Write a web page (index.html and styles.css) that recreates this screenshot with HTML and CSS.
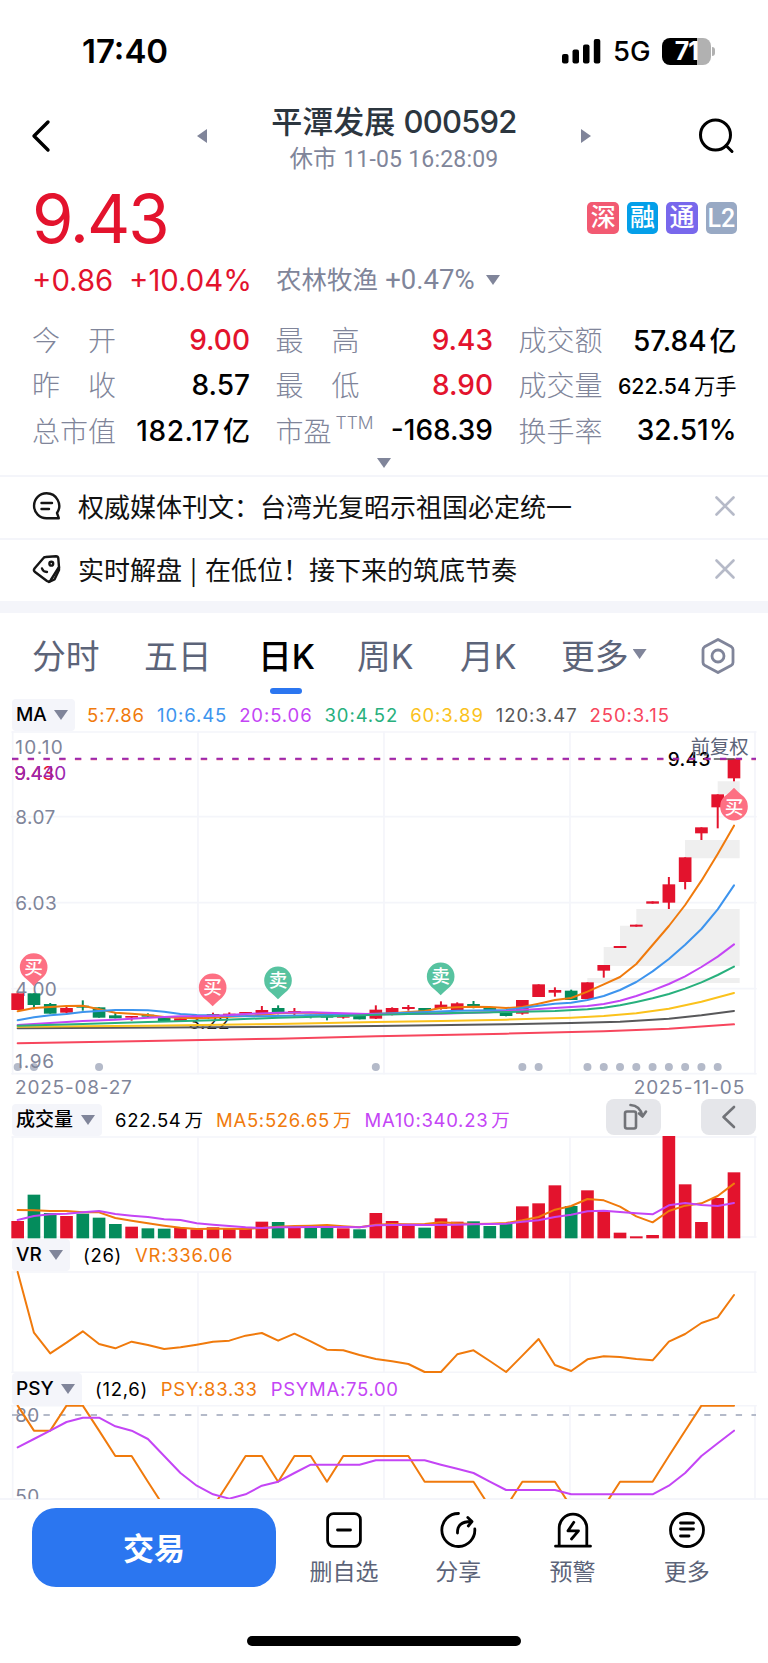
FILE: index.html
```html
<!DOCTYPE html>
<html lang="zh-CN">
<head>
    <meta charset="UTF-8">
    <meta name="viewport" content="width=device-width, initial-scale=1.0">
    <title>平潭发展 000592</title>
    <link rel="stylesheet" href="styles.css">
</head>
<body>
    <div class="status">
        <span class="time">17:40</span>
        <svg class="signal" width="39" height="25" viewBox="0 0 39 25">
            <rect x="0" y="15" width="6.5" height="9.5" rx="2"/>
            <rect x="10.5" y="10.5" width="6.5" height="14" rx="2"/>
            <rect x="21" y="5.5" width="6.5" height="19" rx="2"/>
            <rect x="31.8" y="0" width="6.5" height="24.5" rx="2"/>
        </svg>
        <span class="net">5G</span>
        <div class="battery"><span>71</span></div>
        <i class="battery-cap"></i>
    </div>

    <header class="header">
        <svg class="back" width="20" height="34" viewBox="0 0 20 34"><path d="M17 3 L3 17 L17 31"/></svg>
        <i class="tri tri-left"></i>
        <div class="title">
            <h1>平潭发展 <span>000592</span></h1>
            <p>休市 <span>11-05 16:28:09</span></p>
        </div>
        <i class="tri tri-right"></i>
        <svg class="search" width="37" height="37" viewBox="0 0 37 37"><circle cx="17.5" cy="17" r="15"/><path d="M28 27.5 L34 33.5"/></svg>
    </header>

    <section class="quote">
        <div class="price-row">
            <span class="price">9.43</span>
            <div class="tags">
                <span class="tag tag-red">深</span>
                <span class="tag tag-blue">融</span>
                <span class="tag tag-purple">通</span>
                <span class="tag tag-gray">L2</span>
            </div>
        </div>
        <div class="change-row">
            <span class="chg">+0.86</span>
            <span class="pct">+10.04%</span>
            <span class="sector">农林牧渔 <em>+0.47%</em></span>
            <i class="tri tri-down"></i>
        </div>
        <div class="stats">
            <div class="stat"><label>今<s></s>开</label><b class="up">9.00</b></div>
            <div class="stat"><label>最<s></s>高</label><b class="up">9.43</b></div>
            <div class="stat"><label>成交额</label><b>57.84<u>亿</u></b></div>
            <div class="stat"><label>昨<s></s>收</label><b>8.57</b></div>
            <div class="stat"><label>最<s></s>低</label><b class="up">8.90</b></div>
            <div class="stat"><label>成交量</label><b class="small">622.54<u>万手</u></b></div>
            <div class="stat"><label>总市值</label><b class="wide">182.17<u>亿</u></b></div>
            <div class="stat"><label>市盈<sup>TTM</sup></label><b>-168.39</b></div>
            <div class="stat"><label>换手率</label><b>32.51%</b></div>
        </div>
        <div class="expand"><i class="tri tri-down"></i></div>
    </section>

    <section class="notices">
        <div class="notice">
            <svg class="notice-icon" width="30" height="30" viewBox="0 0 30 30"><path d="M14.5 2.3 A12.2 12.2 0 1 0 14.5 27.2 H26.8 L25 22 A12.6 12.6 0 0 0 14.5 2.3 Z"/><path d="M9.5 12 H20 M9.5 18 H17"/></svg>
            <p>权威媒体刊文：台湾光复昭示祖国必定统一</p>
            <svg class="close" width="22" height="22" viewBox="0 0 22 22"><path d="M2.5 2.5 L19.5 19.5 M19.5 2.5 L2.5 19.5"/></svg>
        </div>
        <div class="notice">
            <svg class="notice-icon" width="30" height="30" viewBox="0 0 30 30"><path d="M13.5 3 L24 2.3 Q26 2.3 26.3 4.3 L27 13 L18.5 26.5 Q17 28.3 15 27 L3 18 Q1 16.5 2.5 14.5 L11.5 4 Q12.3 3 13.5 3 Z"/><path d="M27 13 V16 L22.5 25.5 L17 28"/><circle cx="19.3" cy="9.7" r="1.9"/><path d="M10 14.5 Q11 17.8 15 18"/></svg>
            <p>实时解盘 | 在低位！接下来的筑底节奏</p>
            <svg class="close" width="22" height="22" viewBox="0 0 22 22"><path d="M2.5 2.5 L19.5 19.5 M19.5 2.5 L2.5 19.5"/></svg>
        </div>
    </section>

    <nav class="tabs">
        <span>分时</span>
        <span>五日</span>
        <span class="active">日K</span>
        <span>周K</span>
        <span>月K</span>
        <span class="more">更多<i class="tri tri-down"></i></span>
        <svg class="settings" width="36" height="38" viewBox="0 0 36 38"><path d="M18 2.5 L31.5 9.8 Q33 10.8 33 12.5 V25.5 Q33 27.2 31.5 28.2 L18 35.5 L4.5 28.2 Q3 27.2 3 25.5 V12.5 Q3 10.8 4.5 9.8 Z"/><circle cx="18" cy="19" r="6"/></svg>
    </nav>

    <section class="charts">
        <div class="bar bar-ma">
            <span class="pick">MA<i class="tri tri-down"></i></span>
            <span class="c-orange">5:7.86</span>
            <span class="c-blue">10:6.45</span>
            <span class="c-purple">20:5.06</span>
            <span class="c-green">30:4.52</span>
            <span class="c-yellow">60:3.89</span>
            <span class="c-dark">120:3.47</span>
            <span class="c-red">250:3.15</span>
        </div>
        <svg class="chart" id="kline" width="768" height="344" viewBox="0 33 2304 1032"></svg>
        <div class="dates"><span>2025-08-27</span><span>2025-11-05</span></div>

        <div class="bar bar-vol">
            <span class="pick">成交量<i class="tri tri-down"></i></span>
            <span>622.54<u>万</u></span>
            <span class="c-orange">MA5:526.65<u>万</u></span>
            <span class="c-purple">MA10:340.23<u>万</u></span>
            <div class="tools">
                <button><svg width="28" height="30" viewBox="0 0 28 30"><rect x="5" y="9.5" width="11" height="17" rx="2"/><path d="M10.5 3 Q20 3.5 22.5 14 M19 11.5 L22.5 14.5 L26 9.5"/></svg></button>
                <button><svg width="28" height="30" viewBox="0 0 28 30"><path d="M19 5 L8.5 15 L19 25"/></svg></button>
            </div>
        </div>
        <svg class="chart" id="volume" width="768" height="103" viewBox="0 138 2304 309"></svg>

        <div class="bar bar-vr">
            <span class="pick">VR<i class="tri tri-down"></i></span>
            <span class="param">(26)</span>
            <span class="c-orange">VR:336.06</span>
        </div>
        <svg class="chart" id="vr" width="768" height="102" viewBox="0 540 2304 306"></svg>

        <div class="bar bar-psy">
            <span class="pick">PSY<i class="tri tri-down"></i></span>
            <span class="param">(12,6)</span>
            <span class="c-orange">PSY:83.33</span>
            <span class="c-purple">PSYMA:75.00</span>
        </div>
        <svg class="chart" id="psy" width="768" height="94" viewBox="0 102 2304 282"></svg>
    </section>

    <footer class="footer">
        <button class="trade">交易</button>
        <div class="action">
            <svg width="40" height="40" viewBox="0 0 40 40"><rect x="3.6" y="3.6" width="32.8" height="32.8" rx="6"/><path d="M13.5 20 H26.5"/></svg>
            <span>删自选</span>
        </div>
        <div class="action">
            <svg width="40" height="40" viewBox="0 0 40 40"><path d="M20.5 3.5 A16.5 16.5 0 1 0 36.8 19"/><path d="M19.5 23 Q19 11.5 33 11.5 M29.8 7.5 L34 11.5 L30.3 16"/></svg>
            <span>分享</span>
        </div>
        <div class="action">
            <svg width="40" height="40" viewBox="0 0 40 40"><path d="M6.2 36 V18 A13.8 13.8 0 0 1 33.8 18 V36 M2.5 36.2 H37.5"/><path d="M20.8 12.3 L15 20.8 H25.5 L18.5 29"/></svg>
            <span>预警</span>
        </div>
        <div class="action">
            <svg width="40" height="40" viewBox="0 0 40 40"><circle cx="20" cy="20" r="16.5"/><path d="M13.5 13 H26.5 M13.5 19 H26.5 M13.5 26 H22"/></svg>
            <span>更多</span>
        </div>
    </footer>
    <div class="home"></div>

    <script src="main.js"></script>
</body>
</html>
```
FILE: styles.css
```css
* {
    box-sizing: border-box;
}

body {
    margin: 0;
    width: 768px;
    height: 1663px;
    overflow: hidden;
    background-color: #ffffff;
    color: #000000;
    font-family: Inter, 'Noto Sans CJK SC', sans-serif;
}

h1, p {
    margin: 0;
    font-weight: 400;
}

em, i, s, u {
    font-style: normal;
    text-decoration: none;
}

svg {
    display: block;
    flex: none;
    fill: none;
    stroke-linecap: round;
    stroke-linejoin: round;
}

button {
    border: none;
    padding: 0;
    font-family: inherit;
}

/* треугольники */
.tri {
    flex: none;
    display: block;
    background-color: #80859a;
}

.tri-down {
    width: 14px;
    height: 10px;
    clip-path: polygon(0 0, 100% 0, 50% 100%);
}

.tri-left {
    width: 10px;
    height: 14px;
    clip-path: polygon(100% 0, 100% 100%, 0 50%);
}

.tri-right {
    width: 10px;
    height: 14px;
    clip-path: polygon(0 0, 100% 50%, 0 100%);
}

/* статус-бар */
.status {
    display: flex;
    align-items: center;
    height: 102px;
    padding-left: 82px;
}

.time {
    width: 480px;
    font-size: 33px;
    font-weight: 600;
}

.signal {
    fill: #000000;
}

.net {
    width: 49px;
    padding-left: 12px;
    font-size: 27.5px;
    font-weight: 500;
}

.battery {
    width: 49px;
    height: 27px;
    margin-left: 12px;
    border-radius: 8px;
    background: linear-gradient(to right, #000000 35px, #b1b1b1 35px);
    color: #ffffff;
    font-size: 25px;
    font-weight: 700;
    line-height: 27px;
    text-align: center;
    letter-spacing: -1px;
}

.battery-cap {
    width: 3px;
    height: 9px;
    margin-left: 1px;
    border-radius: 0 4px 4px 0;
    background-color: #b1b1b1;
}

/* шапка */
.header {
    display: flex;
    align-items: center;
    height: 68px;
    padding: 0 33px 0 31px;
}

.back {
    stroke: #000000;
    stroke-width: 3.4;
}

.header .tri-left {
    margin-left: 146px;
}

.title {
    width: 374px;
    padding-top: 8px;
    text-align: center;
}

.title h1 {
    color: #2c363f;
    font-size: 31px;
    font-weight: 500;
    line-height: 38px;
    white-space: nowrap;
}

.title h1 span {
    font-size: 31px;
    font-weight: 450;
    letter-spacing: -0.8px;
}

.title p {
    color: #80859a;
    font-size: 23.5px;
    line-height: 36px;
}

.title p span {
    font-family: Roboto, sans-serif;
    font-size: 23px;
    letter-spacing: 0.2px;
}

.search {
    margin-left: auto;
    stroke: #000000;
    stroke-width: 3;
}

/* цена */
.quote {
    height: 305px;
    padding: 0 31px 0 32px;
}

.price-row {
    display: flex;
    justify-content: space-between;
    align-items: center;
    height: 96px;
}

.price {
    color: #e3132d;
    font-size: 67px;
    letter-spacing: -2.1px;
}

.tags {
    display: flex;
    gap: 8px;
}

.tag {
    width: 31.4px;
    height: 32px;
    border-radius: 5px;
    color: #ffffff;
    font-size: 25px;
    font-weight: 500;
    line-height: 31px;
    text-align: center;
}

.tag-red { background-color: #f25a72; }
.tag-blue { background-color: #049fe9; }
.tag-purple { background-color: #7868ec; }
.tag-gray {
    background-color: #98a9c4;
    font-family: Roboto, sans-serif;
    line-height: 33px;
}

.change-row {
    display: flex;
    align-items: center;
    height: 28px;
    color: #e3132d;
    font-size: 29.3px;
}

.chg { width: 97px; }
.pct { width: 147px; }

.sector {
    width: 210px;
    margin-top: -6px;
    color: #80859a;
    font-size: 25.5px;
    white-space: nowrap;
}

.sector em {
    font-family: Roboto, 'Noto Sans CJK SC', sans-serif;
    font-size: 27.5px;
}

.stats {
    display: grid;
    grid-template-columns: 218px 217.5px 218px;
    grid-template-rows: repeat(3, 45.3px);
    column-gap: 25.5px;
    margin-top: 23px;
}

.stat {
    display: flex;
    justify-content: space-between;
    align-items: center;
    white-space: nowrap;
}

.stat label {
    display: flex;
    margin-top: -1px;
    color: #80859a;
    font-size: 28px;
    font-weight: 300;
}

.stat s {
    width: 28px;
}

.stat sup {
    font-size: 17.5px;
    line-height: 18px;
    margin: 4px 0 0 4px;
}

.stat b {
    font-size: 28px;
    font-weight: 500;
}

.stat b u {
    margin-left: 3px;
    font-size: 27px;
}

.stat b.up {
    color: #e3132d;
}

.stat b.wide {
    margin-top: -2px;
    letter-spacing: 0.6px;
}

.stat b.wide u {
    letter-spacing: 0;
}

.stat b.small {
    font-size: 21.3px;
}

.stat b.small u {
    font-size: 21.3px;
    font-weight: 400;
}

.expand {
    display: flex;
    justify-content: center;
    padding: 5px 1px 0 0;
}

/* новости */
.notices {
    border-bottom: 12px solid #f4f5fa;
}

.notice {
    display: flex;
    align-items: center;
    height: 63px;
    border-top: 2px solid #f4f5fa;
    padding: 0 32px 3px;
}

.notice-icon {
    stroke: #151515;
    stroke-width: 2.4;
}

.notice p {
    margin-top: -2px;
    padding-left: 16px;
    font-size: 26px;
    color: #111111;
    white-space: nowrap;
    word-spacing: 2.2px;
    font-family: 'Noto Sans CJK SC', sans-serif;
}

.close {
    margin-left: auto;
    stroke: #b6bac8;
    stroke-width: 2.6;
}

/* вкладки */
.tabs {
    display: flex;
    align-items: center;
    height: 86px;
    padding: 0 32px 4px;
    color: #5c6479;
    font-size: 33.8px;
    white-space: nowrap;
}

.tabs span {
    position: relative;
}

.tabs span:nth-child(1) { width: 112px; }
.tabs span:nth-child(2) { width: 114px; }
.tabs span:nth-child(3) { width: 99px; }
.tabs span:nth-child(4) { width: 103px; }
.tabs span:nth-child(5) { width: 101px; }

.tabs .active {
    color: #000000;
    font-weight: 500;
}

.tabs .active::after {
    content: '';
    position: absolute;
    left: 12px;
    bottom: -15px;
    width: 32px;
    height: 6px;
    border-radius: 3px;
    background-color: #2b76f0;
}

.tabs .more {
    display: flex;
    align-items: center;
    gap: 4px;
}

.settings {
    margin: 4px 0 0 auto;
    stroke: #80859a;
    stroke-width: 2.8;
}

/* графики */
.chart {
    overflow: hidden;
}

.chart text {
    font-family: Inter, 'Noto Sans CJK SC', sans-serif;
}

.bar {
    display: flex;
    height: 32px;
    padding-left: 12px;
    font-size: 18.5px;
    letter-spacing: 0.7px;
    line-height: 32px;
    white-space: nowrap;
}

.bar .pick {
    display: flex;
    align-items: center;
    justify-content: space-between;
    padding: 0 7px 0 4px;
    border-radius: 4px;
    background-color: #f4f5fa;
    font-weight: 500;
    letter-spacing: 0;
    font-size: 19px;
}

.bar u {
    margin-left: 3px;
    letter-spacing: 0;
}

.bar-ma { letter-spacing: 0.9px; }
.bar-ma .pick { width: 63px; margin-right: 12px; }
.bar-ma span + span { margin-right: 12px; }

.bar-vol {
    height: 36px;
    padding-top: 4px;
}

.bar-vol .pick { width: 90px; margin-right: 13px; }
.bar-vol span + span { margin-right: 13px; }

.bar-vr .pick { width: 58px; margin-right: 13px; }
.bar-psy .pick { width: 70px; margin-right: 13px; }
.bar .param { margin-right: 13px; }
.bar-psy .c-orange { margin-right: 13px; }

.tools {
    display: flex;
    gap: 40px;
    margin: -5px 12px 0 auto;
}

.tools button {
    display: flex;
    align-items: center;
    justify-content: center;
    width: 55px;
    height: 36px;
    border-radius: 8px;
    background-color: #e5e6ea;
}

.tools svg {
    stroke: #717378;
    stroke-width: 2.6;
}

.c-orange { color: #f07a0c; }
.c-blue { color: #3d94ee; }
.c-purple { color: #c445f5; }
.c-green { color: #28b07d; }
.c-yellow { color: #fbc21c; }
.c-dark { color: #58585a; }
.c-red { color: #f7465d; }

.dates {
    display: flex;
    justify-content: space-between;
    height: 25px;
    padding: 0 23px 0 15px;
    color: #80859a;
    font-size: 19px;
    letter-spacing: 0.8px;
    line-height: 25px;
}

/* нижняя панель */
.footer {
    display: flex;
    margin-top: -1px;
    border-top: 2px solid #f4f5fa;
    padding: 8px 24px 0 32px;
}

.trade {
    width: 244px;
    height: 79px;
    margin-right: 11px;
    padding-bottom: 2px;
    border-radius: 24px;
    background-color: #2b76f0;
    color: #ffffff;
    font-size: 31px;
    font-weight: 700;
}

.action {
    display: flex;
    flex-direction: column;
    align-items: center;
    width: 114.3px;
    padding-top: 2px;
    color: #5c6479;
    font-size: 23px;
    line-height: 44px;
}

.action svg {
    stroke: #000000;
    stroke-width: 2.8;
}

.home {
    width: 274px;
    height: 10px;
    margin: 42px auto 0;
    border-radius: 5px;
    background-color: #000000;
}
```
FILE: main.js
```js
const RED = '#e3132d';
const GREEN = '#048c5c';
const GRID = '#f4f5fa';
const STEP = 48.84;

const px = i => 53 + i * STEP;

function add(id, markup) {
    document.getElementById(id).insertAdjacentHTML('beforeend', markup);
}

function hline(y) {
    return `<path d="M36 ${y} H2268" stroke="${GRID}" stroke-width="5"/>`;
}

// Рамка и вертикальная сетка
function frame(top, bottom) {
    const cols = [38, 594, 1152, 1710, 2265];
    return hline(top) + hline(bottom) +
        cols.map(x => `<path d="M${x} ${top} V${bottom}" stroke="${GRID}" stroke-width="5"/>`).join('');
}

// Каждый элемент - y или [индекс, y]
function line(points, color) {
    const d = points.map((p, i) => Array.isArray(p) ? `${px(p[0])},${p[1]}` : `${px(i)},${p}`).join(' ');
    return `<polyline points="${d}" stroke="${color}" stroke-width="6"/>`;
}

function label(x, y, text, width, color = '#80859a', weight = 400) {
    return `<text x="${x}" y="${y}" font-size="57" font-weight="${weight}" textLength="${width}" fill="${color}">${text}</text>`;
}

function dashes(y, color) {
    return `<path d="M36 ${y} H2268" stroke="${color}" stroke-width="6" stroke-dasharray="19 28.2" stroke-linecap="butt"/>`;
}

// цвет, тело верх/низ, тень верх/низ
const candles = [
    ['r', 820, 870, 820, 870], ['g', 820, 855, 820, 868], ['g', 852, 881, 849, 881], ['r', 864, 878, 858, 880],
    ['g', 857, 863, 841, 872], ['g', 862, 893, 862, 893], ['g', 886, 895, 878, 895], ['r', 888, 893, 888, 902],
    ['g', 884, 890, 880, 890], ['g', 893, 905, 893, 905], ['r', 895, 903, 895, 903], ['r', 890, 895, 890, 900],
    ['r', 882, 888, 878, 892], ['r', 881, 886, 877, 888], ['r', 876, 881, 876, 881], ['r', 870, 879, 858, 881],
    ['g', 864, 879, 856, 883], ['r', 873, 877, 864, 889], ['g', 884, 889, 884, 895], ['g', 880, 893, 880, 901],
    ['r', 889, 893, 885, 896], ['g', 883, 898, 883, 898], ['r', 869, 896, 856, 897], ['r', 864, 879, 862, 886],
    ['r', 861, 867, 855, 872], ['g', 864, 875, 864, 875], ['r', 854, 867, 844, 869], ['r', 850, 870, 847, 870],
    ['g', 852, 861, 843, 865], ['g', 862, 870, 862, 870], ['g', 873, 888, 873, 889], ['r', 840, 881, 840, 884],
    ['r', 793, 831, 793, 831], ['r', 810, 818, 802, 830], ['g', 812, 840, 809, 840], ['r', 787, 837, 787, 837],
    ['r', 735, 752, 735, 773], ['r', 678, 684, 678, 684], ['r', 614, 620, 614, 620], ['r', 544, 551, 544, 551],
    ['r', 493, 548, 471, 567], ['r', 412, 486, 412, 508], ['r', 322, 340, 322, 360], ['r', 223, 262, 223, 325],
    ['r', 116, 175, 116, 184]
];

const volumes = [
    393, 314, 369, 378, 371, 383, 402, 410, 415, 416, 414, 418, 412, 417, 416, 395, 396, 414, 410, 410, 415, 418, 369,
    393, 407, 413, 385, 395, 394, 408, 402, 349, 340, 286, 348, 301, 365, 428, 439, 435, 138, 283, 396, 324, 247
];

// Маркеры покупки и продажи
function pin(x, y, text, color, up) {
    const rot = up ? ` transform="rotate(180 ${x} ${y})"` : '';
    return `<path${rot} d="M${x} ${y + 57} Q${x - 9} ${y + 47} ${x - 28} ${y + 31} A41.5 41.5 0 1 1 ${x + 28} ${y + 31} Q${x + 9} ${y + 47} ${x} ${y + 57} Z" fill="${color}"/>` +
        `<text x="${x}" y="${y + 21}" font-size="56" font-weight="500" text-anchor="middle" fill="#fff">${text}</text>`;
}

// Дневной график
let k = frame(36, 1061) + hline(290) + hline(548) + hline(806);
k += '<path d="M2153 184 H2219 V223 H2153 Z M2055 360 H2219 V415 H2055 Z M1909 567 H2219 V738 H1811 V681 H1860 V617 H1909 Z M1762 774 H2219 V789 H1762 Z" fill="#efefef"/>';
k += [0, 1, 5, 22, 31, 32, 35, 36, 37, 38, 39, 40, 41, 42, 43].map(i => `<circle cx="${px(i)}" cy="1041" r="12" fill="#b4bac9"/>`).join('');
k += label(46, 101, '10.10', 142) + label(46, 312, '8.07', 120) + label(46, 570, '6.03', 124) + label(46, 828, '4.00', 124) + label(46, 1045, '1.96', 116);
k += label(565, 927, '3.22', 124, '#111') + label(2003, 138, '9.43', 128, '#000', 500);
k += '<text x="2072" y="101" font-size="58" fill="#5c6479">前复权</text>';
k += candles.map(([c, top, bottom, high, low], i) => {
    const color = c === 'r' ? RED : GREEN;
    return `<path d="M${px(i)} ${high} V${low}" stroke="${color}" stroke-width="6" stroke-linecap="butt"/>` +
        `<rect x="${px(i) - 19}" y="${top}" width="38" height="${bottom - top}" fill="${color}"/>`;
}).join('');
k += line([[0, 970], [8, 963], [16, 956], [22, 949], [30, 941], [36, 934], [40, 926], [44, 913]], '#f7465d');
k += line([[0, 925], [12, 922], [22, 918], [30, 913], [34, 909], [37, 905], [40, 896], [42, 886], [44, 873]], '#58585a');
k += line([[0, 920], [8, 917], [16, 912], [22, 906], [26, 903], [30, 899], [34, 893], [36, 888], [38, 880], [40, 866], [42, 845], [44, 819]], '#fbc21c');
k += line([874, 864, 861, 858, 857, 868, 878, 881, 885, 891, 893, 895, 893, 890, 888, 884, 880, 878, 878, 880, 883, 885, 882, 880, 876, 873, 864, 862, 860, 861, 864, 861, 851, 840, 834, 815, 793, 771, 732, 675, 618, 555, 482, 402, 317], '#f07a0c');
k += line([901, 892, 886, 882, 876, 873, 870, 870, 871, 875, 882, 885, 886, 888, [15, 889], [18, 886], [22, 881], [24, 878], [27, 872], [30, 870], [31, 864], [32, 857], [33, 851], [34, 848], [35, 840], [36, 828], [37, 810], [38, 786], [39, 754], [40, 717], [41, 674], [42, 627], [43, 568], [44, 496]], '#3d94ee');
k += line([[0, 915], [2, 909], [4, 903], [6, 899], [8, 893], [10, 889], [12, 888], [14, 882], [16, 878], [18, 877], [20, 880], [22, 883], [26, 881], [29, 877], [31, 870], [33, 864], [35, 858], [36, 852], [37, 842], [38, 828], [39, 811], [40, 792], [41, 769], [42, 741], [43, 710], [44, 673]], '#c445f5');
k += line([[0, 917], [4, 912], [8, 906], [12, 901], [16, 893], [20, 888], [22, 884], [26, 880], [30, 876], [33, 873], [35, 868], [36, 863], [37, 856], [38, 846], [39, 835], [40, 822], [41, 806], [42, 787], [43, 765], [44, 740]], '#28b07d');
k += '<path d="M2143 117 H2202" stroke="#555" stroke-width="4"/>';
k += `<g opacity="0.6">${dashes(118, RED)}</g>` + dashes(116, '#9c27b0');
k += label(43, 179, '9.43', 120, RED) + label(43, 179, '9.440', 156, '#9c27b0');
k += pin(101, 741, '买', '#fd7083') + pin(638, 802, '买', '#fd7083') + pin(834, 781, '卖', '#57c3a0') + pin(1322, 769, '卖', '#57c3a0') + pin(2202, 260, '买', '#fd7083', true);
add('kline', k);

// Объём
let v = frame(141, 441);
v += volumes.map((top, i) => `<rect x="${px(i) - 19}" y="${top}" width="38" height="${445 - top}" fill="${candles[i][0] === 'r' ? RED : GREEN}"/>`).join('');
v += line([360, 361, 363, 363, 367, 367, 384, 392, 400, 407, 413, 417, 416, 416, 417, 414, 410, 408, 407, 405, 409, 412, 404, 402, 403, 402, 397, 400, 402, 401, 399, 391, 381, 359, 348, 327, 331, 350, 379, 397, 363, 347, 340, 318, 281], '#f07a0c');
v += line([390, 378, 373, 371, 367, 363, 372, 377, 381, 388, 390, 400, 404, 408, 412, 414, 412, 412, 411, 411, 411, 412, 406, 405, 404, 405, 405, 404, 403, 402, 401, 395, 391, 381, 374, 364, 362, 366, 370, 373, 346, 339, 345, 348, 339], '#c445f5');
add('volume', v);

// VR
add('vr', frame(543, 844) + line([543, 725, 787, 755, 721, 759, 772, 752, 762, 774, 769, 761, 752, 749, 734, 726, 749, 728, 751, 776, 778, 792, 804, 811, 819, 843, 843, 790, 778, 810, 843, 794, 744, 822, 840, 805, 796, 798, 804, 808, 752, 729, 696, 679, 612], '#f07a0c'));

// PSY
let p = frame(104, 420);
p += dashes(132, '#b4bac9');
p += label(46, 153, '80', 72) + label(46, 397, '50', 72);
p += line([104, 179, 179, 104, 104, 179, 255, 255, 332, 408, 484, 484, 408, 332, 255, 255, 332, 255, 255, 332, 255, 255, 255, 255, 255, 332, 332, 332, 332, 408, 408, 332, 332, 332, 408, 408, 408, 332, 332, 332, 255, 179, 104, 104, 104], '#f07a0c');
p += line([229, 204, 179, 153, 140, 140, 166, 179, 204, 255, 306, 344, 370, 383, 370, 344, 332, 306, 281, 281, 281, 281, 268, 268, 268, 268, 281, 293, 306, 332, 357, 357, 357, 357, 370, 370, 370, 370, 370, 370, 344, 306, 255, 217, 179], '#c445f5');
add('psy', p);
```
